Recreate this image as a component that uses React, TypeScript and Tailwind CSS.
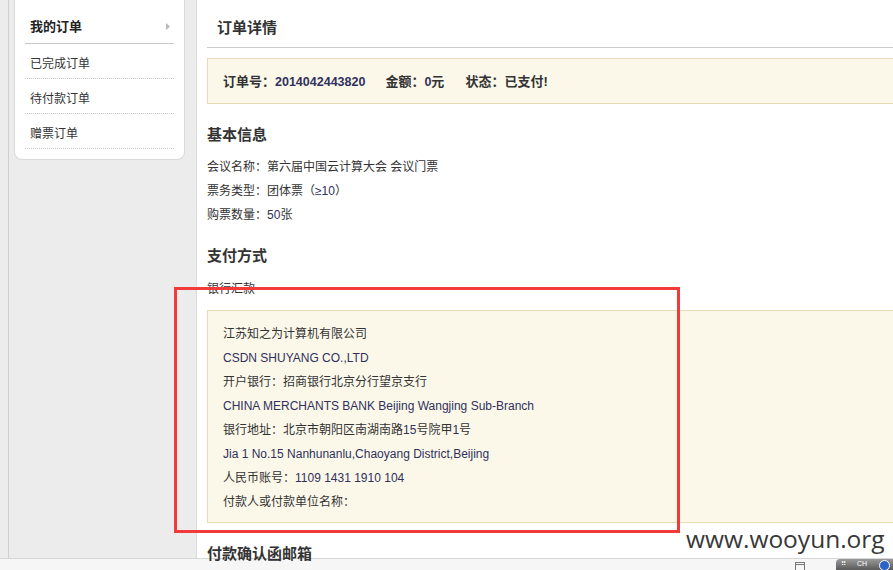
import React from "react";

const L = ({ children }: { children: React.ReactNode }) => (
  <span className="text-[#30305c]">{children}</span>
);

export default function App() {
  return (
    <div
      className="relative w-[893px] h-[570px] overflow-hidden bg-white text-[#333] text-[12px]"
      style={{ fontFamily: '"Liberation Sans", "Noto Sans CJK SC", sans-serif' }}
    >
      <div className="flex h-[558px]">
        {/* left column */}
        <div className="w-[197px] shrink-0 bg-[#ececec] pl-[8px] border-r border-[#dcdcdc]">
          <div className="h-full border-l border-[#cfcfcf] pl-[5px]">
            <div className="w-[171px] bg-white border border-t-0 border-[#dadada] rounded-b-[8px] px-[10px] pb-[10px]">
              <div className="h-[44px] pt-[10px] flex items-center justify-between border-b border-[#c8c8c8] pl-[5px] pr-[4px]">
                <span className="font-bold text-[13px] text-[#222]">我的订单</span>
                <svg width="4" height="7" viewBox="0 0 4 7">
                  <polygon points="0,0 4,3.5 0,7" fill="#b8b8b8" />
                </svg>
              </div>
              {["已完成订单", "待付款订单", "赠票订单"].map((t) => (
                <div
                  key={t}
                  className="h-[35px] flex items-center pl-[5px] pt-[5px] border-b border-dotted border-[#c8c8c8] text-[12px] text-[#333]"
                >
                  {t}
                </div>
              ))}
            </div>
          </div>
        </div>

        {/* main */}
        <div className="flex-1 pl-[10px] min-w-0">
          <div className="h-[48px] pt-[9px] pl-[10px] flex items-center border-b border-[#cccccc]">
            <span className="font-bold text-[15px] text-[#333]">订单详情</span>
          </div>
          <div className="mt-[10px] h-[46px] bg-[#fbf8ea] border border-r-0 border-[#e6dbb8] pl-[15px] pt-[1px] flex items-center font-bold text-[13px] text-[#333]">
            <span>
              订单号：<span className="text-[12.5px]"><L>2014042443820</L></span>
            </span>
            <span className="ml-[20px]">
              金额：<span className="text-[12.5px]"><L>0</L></span>元
            </span>
            <span className="ml-[21px]">状态：已支付!</span>
          </div>

          <div className="mt-[19px] leading-[24px] font-bold text-[15px]">基本信息</div>
          <div className="mt-[8px] leading-[24px]">
            <div>会议名称：第六届中国云计算大会 会议门票</div>
            <div>
              票务类型：团体票（<L>≥10</L>）
            </div>
            <div>
              购票数量：<L>50</L>张
            </div>
          </div>

          <div className="mt-[17px] leading-[24px] font-bold text-[15px]">支付方式</div>
          <div className="mt-[9px] leading-[24px]">银行汇款</div>

          <div className="mt-[9px] bg-[#fbf8ea] border border-r-0 border-[#e6dbb8] pl-[15px] pt-[11px] pb-[8px] leading-[24px]">
            <div>江苏知之为计算机有限公司</div>
            <div>
              <L>CSDN SHUYANG CO.,LTD</L>
            </div>
            <div>开户银行：招商银行北京分行望京支行</div>
            <div>
              <L>CHINA MERCHANTS BANK Beijing Wangjing Sub-Branch</L>
            </div>
            <div>
              银行地址：北京市朝阳区南湖南路<L>15</L>号院甲<L>1</L>号
            </div>
            <div>
              <L>Jia 1 No.15 Nanhunanlu,Chaoyang District,Beijing</L>
            </div>
            <div>
              人民币账号：<L>1109 1431 1910 104</L>
            </div>
            <div>付款人或付款单位名称：</div>
          </div>

          <div className="mt-[19px] leading-[24px] font-bold text-[15px]">付款确认函邮箱</div>
        </div>
      </div>

      {/* bottom status bar */}
      <div className="h-[12px] bg-[#f6f6f6] border-t border-[#d6d6d6] flex items-start justify-end">
        <svg className="mr-[31px] mt-[3px]" width="10" height="9" viewBox="0 0 10 9">
          <rect x="0.5" y="0.5" width="9" height="9" fill="none" stroke="#777" />
          <line x1="0.5" y1="2.5" x2="9.5" y2="2.5" stroke="#777" />
        </svg>
        <div className="w-[57px] h-[11px] rounded-tl-[4px] bg-gradient-to-b from-[#9a9a9a] to-[#5a5a5a] relative">
          <span className="absolute left-[5px] top-[1px] text-[7px] leading-[7px] text-white">⠿</span>
          <span className="absolute left-[21px] top-[1px] text-[7px] leading-[7px] text-white">CH</span>
          <span className="absolute right-[3px] top-[1px] w-[11px] h-[11px] rounded-full bg-[#2a62c9] border border-white" />
        </div>
      </div>

      {/* annotation overlay */}
      <div className="absolute left-[174px] top-[287px] w-[506px] h-[246px] border-[3px] border-[#f23a3a] pointer-events-none" />

      {/* watermark */}
      <div
        className="absolute left-[686px] top-[524px] text-[24.5px] leading-[30px] text-[#383838]"
        style={{ fontFamily: '"Open Sans", sans-serif' }}
      >
        www.wooyun.org
      </div>
    </div>
  );
}
